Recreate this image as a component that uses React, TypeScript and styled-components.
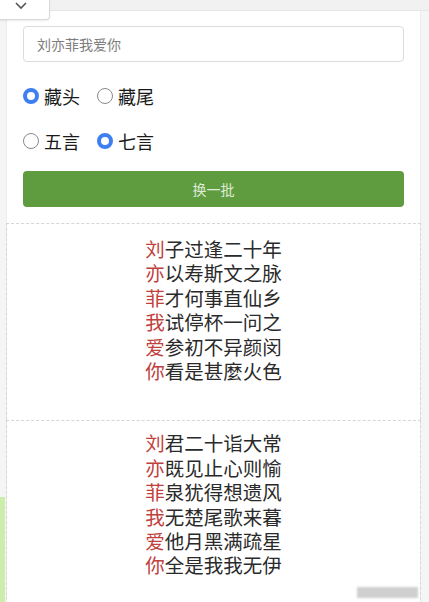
import styled, { createGlobalStyle } from 'styled-components';

const GlobalStyle = createGlobalStyle`
  html, body {
    margin: 0;
    padding: 0;
    background: #f4f5f6;
    font-family: "Noto Sans CJK SC", "Noto Sans", sans-serif;
    color: #333;
  }
  * { box-sizing: border-box; }
`;

const Page = styled.div`
  position: relative;
  min-height: 602px;
  display: flex;
  flex-direction: column;
  overflow: hidden;
`;

const TopStrip = styled.div`
  height: 11px;
  background: #f1f1f1;
  border-bottom: 1px solid #e6e6e6;
`;

const ToggleTab = styled.div`
  position: absolute;
  left: 0;
  top: 0;
  width: 50px;
  height: 20px;
  background: #fff;
  border: 1px solid #d9d9d9;
  border-top: none;
  border-left: none;
  border-bottom-right-radius: 4px;
  box-shadow: 0 1px 2px rgba(0, 0, 0, 0.08);
  display: flex;
  justify-content: center;
  padding-top: 1px;
  padding-right: 8px;
`;

const Card = styled.div`
  margin: 0 8px 0 6px;
  background: #fff;
  border-left: 1px solid #ececec;
  border-right: 1px solid #ececec;
  flex: 1;
`;

const Form = styled.div`
  padding: 15px 16px 16px;
  display: flex;
  flex-direction: column;
`;

const NameInput = styled.input`
  height: 36px;
  border: 1px solid #dcdcdc;
  border-radius: 4px;
  padding: 0 13px;
  font-family: inherit;
  font-size: 14px;
  color: #333;
  outline: none;
  &::placeholder {
    color: #7d7d7d;
  }
`;

const RadioRow = styled.div`
  height: 45px;
  display: flex;
  align-items: center;
  gap: 17px;
  &:first-of-type {
    margin-top: 11px;
  }
`;

const RadioLabel = styled.label`
  display: flex;
  align-items: center;
  gap: 5px;
  font-size: 18px;
  color: #1a1a1a;
`;

const RadioDot = styled.span<{ $checked?: boolean }>`
  width: 16px;
  height: 16px;
  border-radius: 50%;
  border: ${(p) => (p.$checked ? '4.5px solid #3d7ef0' : '1px solid #8a8a8a')};
  background: #fff;
`;

const SwapButton = styled.button`
  margin-top: 8px;
  height: 36px;
  border: none;
  border-radius: 4px;
  background: #5f9c3f;
  color: #dfebd6;
  font-family: inherit;
  font-size: 14px;
`;

const PoemBlock = styled.div`
  border: 1px dashed #d6d6d6;
  border-bottom: none;
  margin: 0 -1px;
  padding: 13px 0 37px;
  display: flex;
  flex-direction: column;
  align-items: center;
  & + & {
    padding-top: 10px;
  }
`;

const PoemLine = styled.div`
  font-size: 19.5px;
  line-height: 24.4px;
  color: #2a2a2a;
`;

const Head = styled.span`
  color: #c0403d;
`;

const SideMark = styled.div`
  position: absolute;
  left: 0;
  top: 497px;
  width: 5px;
  height: 110px;
  background: #cdeeaa;
`;

const Smudge = styled.div`
  position: absolute;
  left: 357px;
  top: 587px;
  width: 61px;
  height: 11px;
  background: #cfcfcf;
  filter: blur(1px);
`;

const poems = [
  ['刘子过逢二十年', '亦以寿斯文之脉', '菲才何事直仙乡', '我试停杯一问之', '爱参初不异颜闵', '你看是甚麼火色'],
  ['刘君二十诣大常', '亦既见止心则愉', '菲泉犹得想遗风', '我无楚尾歌来暮', '爱他月黑满疏星', '你全是我我无伊'],
];

const App = () => (
  <Page>
    <GlobalStyle />
    <TopStrip />
    <ToggleTab>
      <svg width="14" height="9" viewBox="0 0 14 9">
        <polyline points="2,2 7,7 12,2" fill="none" stroke="#555" strokeWidth="1.6" />
      </svg>
    </ToggleTab>
    <Card>
      <Form>
        <NameInput placeholder="刘亦菲我爱你" />
        <RadioRow>
          <RadioLabel><RadioDot $checked />藏头</RadioLabel>
          <RadioLabel><RadioDot />藏尾</RadioLabel>
        </RadioRow>
        <RadioRow>
          <RadioLabel><RadioDot />五言</RadioLabel>
          <RadioLabel><RadioDot $checked />七言</RadioLabel>
        </RadioRow>
        <SwapButton>换一批</SwapButton>
      </Form>
      {poems.map((poem, i) => (
        <PoemBlock key={i}>
          {poem.map((line, j) => (
            <PoemLine key={j}>
              <Head>{line[0]}</Head>
              {line.slice(1)}
            </PoemLine>
          ))}
        </PoemBlock>
      ))}
    </Card>
    <SideMark />
    <Smudge />
  </Page>
);

export default App;
